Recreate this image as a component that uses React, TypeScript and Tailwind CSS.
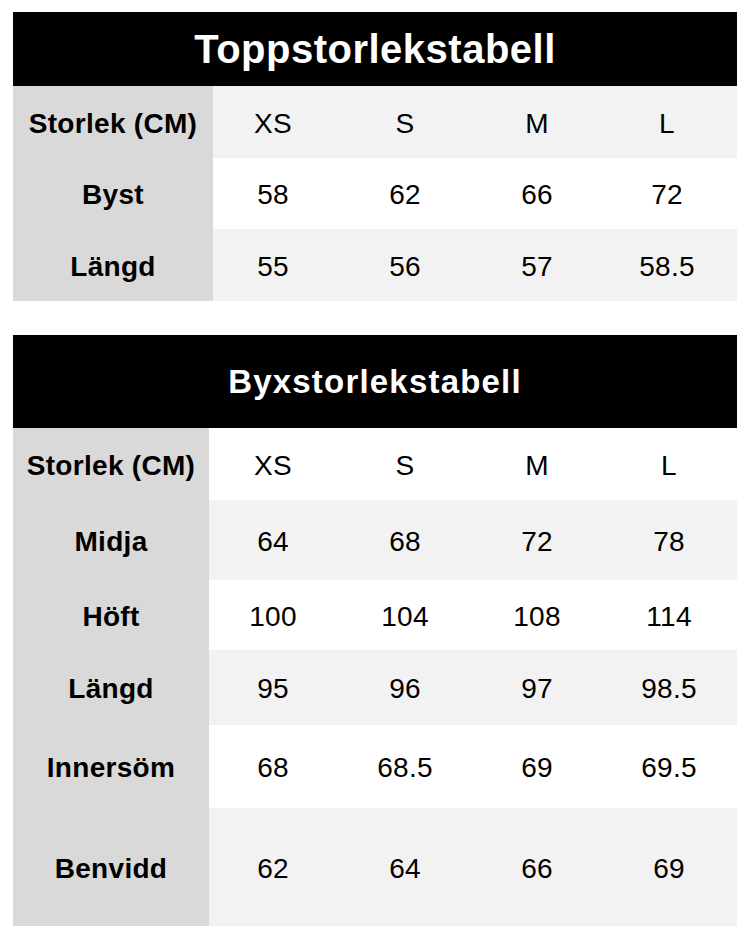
const sizes = ["XS", "S", "M", "L"];

type Row = { label: string; values: string[]; h: string; bg: string };

const topRows: Row[] = [
  { label: "Storlek (CM)", values: sizes, h: "h-[72px]", bg: "bg-[#f2f2f2]" },
  { label: "Byst", values: ["58", "62", "66", "72"], h: "h-[71px]", bg: "bg-white" },
  { label: "Längd", values: ["55", "56", "57", "58.5"], h: "h-[72px]", bg: "bg-[#f2f2f2]" },
];

const bottomRows: Row[] = [
  { label: "Storlek (CM)", values: sizes, h: "h-[72px]", bg: "bg-white" },
  { label: "Midja", values: ["64", "68", "72", "78"], h: "h-[80px]", bg: "bg-[#f2f2f2]" },
  { label: "Höft", values: ["100", "104", "108", "114"], h: "h-[70px]", bg: "bg-white" },
  { label: "Längd", values: ["95", "96", "97", "98.5"], h: "h-[75px]", bg: "bg-[#f2f2f2]" },
  { label: "Innersöm", values: ["68", "68.5", "69", "69.5"], h: "h-[83px]", bg: "bg-white" },
  { label: "Benvidd", values: ["62", "64", "66", "69"], h: "h-[118px]", bg: "bg-[#f2f2f2]" },
];

const SizeTable = ({
  title,
  headerClass,
  titleClass,
  cols,
  rows,
}: {
  title: string;
  headerClass: string;
  titleClass: string;
  cols: string;
  rows: Row[];
}) => (
  <div className="flex flex-col">
    <div className={`bg-black text-white font-bold flex items-center justify-center ${headerClass}`}>
      <span className={titleClass}>{title}</span>
    </div>
    {rows.map((row) => (
      <div key={row.label} className={`grid ${cols} ${row.h} ${row.bg}`}>
        <div className="bg-[#d9d9d9] flex items-center justify-center pt-[3px] font-bold text-[28px] tracking-[0.3px] text-black">
          {row.label}
        </div>
        {row.values.map((v, i) => (
          <div key={i} className="flex items-center justify-center pt-[3px] text-[28px] tracking-[0.3px] text-black">
            {v}
          </div>
        ))}
      </div>
    ))}
  </div>
);

export default function App() {
  return (
    <div className="w-[750px] h-[938px] bg-white px-[13px] pt-[12px] font-['Liberation_Sans',Arial,sans-serif]">
      <div className="flex flex-col gap-[34px]">
        <SizeTable
          title="Toppstorlekstabell"
          headerClass="h-[74px]"
          titleClass="text-[40px] leading-none tracking-[0.5px]"
          cols="grid-cols-[200px_120px_144px_120px_1fr]"
          rows={topRows}
        />
        <SizeTable
          title="Byxstorlekstabell"
          headerClass="h-[93px]"
          titleClass="text-[33px] leading-none tracking-[1.2px]"
          cols="grid-cols-[196px_128px_136px_128px_1fr]"
          rows={bottomRows}
        />
      </div>
    </div>
  );
}
